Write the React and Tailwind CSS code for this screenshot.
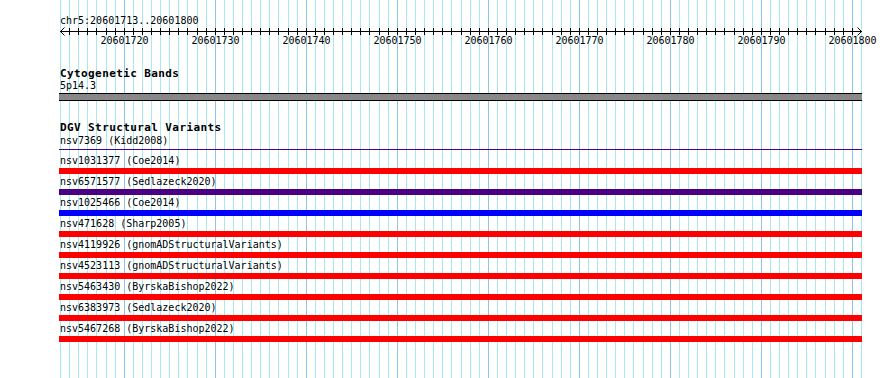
import React from 'react';

const START = 20601713;
const BASES = 88;
const LEFT = 60;
const SCALE = 801 / BASES;

const xAt = (k) => Math.round(LEFT + k * SCALE);

const variants = [
  { id: 'nsv1031377', study: 'Coe2014', color: 'bg-[#ff0000]' },
  { id: 'nsv6571577', study: 'Sedlazeck2020', color: 'bg-[#4b0082]' },
  { id: 'nsv1025466', study: 'Coe2014', color: 'bg-[#0000ff]' },
  { id: 'nsv471628', study: 'Sharp2005', color: 'bg-[#ff0000]' },
  { id: 'nsv4119926', study: 'gnomADStructuralVariants', color: 'bg-[#ff0000]' },
  { id: 'nsv4523113', study: 'gnomADStructuralVariants', color: 'bg-[#ff0000]' },
  { id: 'nsv5463430', study: 'ByrskaBishop2022', color: 'bg-[#ff0000]' },
  { id: 'nsv6383973', study: 'Sedlazeck2020', color: 'bg-[#ff0000]' },
  { id: 'nsv5467268', study: 'ByrskaBishop2022', color: 'bg-[#ff0000]' },
];

// vertical guide lines, one per base, darker every 10
const GuideLines = () => {
  const lines = [];
  for (let k = 0; k <= BASES; k++) {
    const major = (START + k) % 10 === 0;
    lines.push(
      <line
        key={k}
        x1={xAt(k) + 0.5}
        x2={xAt(k) + 0.5}
        y1={0}
        y2={378}
        stroke={major ? '#8cc4ea' : '#a8e8f0'}
        strokeWidth={1}
      />
    );
  }
  return (
    <svg
      className="absolute inset-0 pointer-events-none"
      width={890}
      height={378}
      shapeRendering="crispEdges"
    >
      {lines}
    </svg>
  );
};

const Ruler = () => {
  const ticks = [];
  const labels = [];
  for (let k = 1; k < BASES; k++) {
    const x = xAt(k) + 0.5;
    ticks.push(<line key={k} x1={x} x2={x} y1={1} y2={8} stroke="#000" />);
    if ((START + k) % 10 === 0) {
      labels.push(
        <text key={k} x={xAt(k) + 0.5} y={17} textAnchor="middle" fontSize={10} fill="#000">
          {START + k}
        </text>
      );
    }
  }
  return (
    <svg className="block" width={890} height={21}>
      <g shapeRendering="crispEdges">
        <line x1={60} x2={862} y1={4.5} y2={4.5} stroke="#000" />
        {ticks}
      </g>
      <polyline points="64.5,0.5 60.5,4.5 64.5,8.5" fill="none" stroke="#000" />
      <polyline points="857.5,0.5 861.5,4.5 857.5,8.5" fill="none" stroke="#000" />
      {labels}
    </svg>
  );
};

const App = () => {
  return (
    <div className="relative w-[890px] h-[378px] overflow-hidden bg-white text-black text-[10px] leading-[12px] font-['DejaVu_Sans_Mono','Liberation_Mono',monospace]">
      <GuideLines />

      <div className="relative flex flex-col">
        <div className="mt-[15px] pl-[60px] h-[12px] whitespace-pre">chr5:20601713..20601800</div>
        <Ruler />

        {/* Cytogenetic bands */}
        <div className="mt-[20px] pl-[60px] h-[12px] text-[11px] font-bold tracking-[0.4px]">Cytogenetic Bands</div>
        <div className="pl-[60px] h-[12px]">5p14.3</div>
        <div className="mt-[1px] ml-[59px] w-[803px] h-[8px] bg-[#888888] border-y border-black" />

        {/* DGV */}
        <div className="mt-[21px] pl-[60px] h-[12px] text-[11px] font-bold tracking-[0.4px]">DGV Structural Variants</div>
        <div className="mt-[1px] pl-[60px] h-[12px] whitespace-pre">nsv7369 (Kidd2008)</div>
        <div className="mt-[2px] ml-[59px] w-[803px] h-[1px] bg-[#4b0082]" />

        <div className="mt-[5px] flex flex-col gap-[2px]">
          {variants.map((v) => (
            <div key={v.id} className="flex flex-col">
              <div className="pl-[60px] h-[12px] whitespace-pre">{`${v.id} (${v.study})`}</div>
              <div className={`mt-[1px] ml-[59px] w-[803px] h-[6px] ${v.color}`} />
            </div>
          ))}
        </div>
      </div>
    </div>
  );
};

export default App;
